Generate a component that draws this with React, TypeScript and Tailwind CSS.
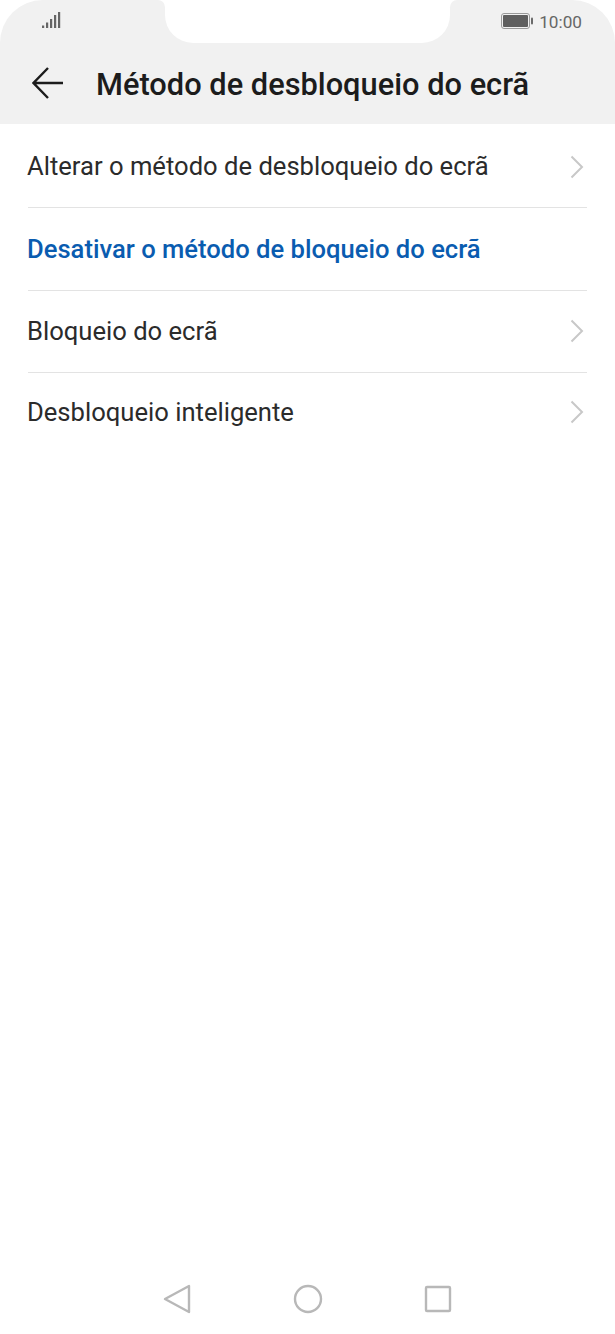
const rows = [
  { label: "Alterar o método de desbloqueio do ecrã", chevron: true },
  { label: "Desativar o método de bloqueio do ecrã", chevron: false },
  { label: "Bloqueio do ecrã", chevron: true },
  { label: "Desbloqueio inteligente", chevron: true },
];

function Signal() {
  return (
    <svg width="20" height="18" viewBox="0 0 20 18" fill="#666666">
      <rect x="1" y="14.5" width="2.2" height="2.5" />
      <rect x="5" y="11.5" width="2.2" height="5.5" />
      <rect x="9" y="8" width="2.2" height="9" />
      <rect x="13" y="4" width="2.2" height="13" />
      <rect x="17" y="1" width="2.2" height="16" />
    </svg>
  );
}

function Battery() {
  return (
    <svg width="33" height="16" viewBox="0 0 33 16">
      <rect x="0.5" y="0.5" width="28" height="15" rx="2.5" fill="none" stroke="#9a9a9a" />
      <rect x="2" y="2" width="25" height="12" rx="1" fill="#5f5f5f" />
      <rect x="30" y="4.5" width="2" height="7" rx="1" fill="#6a6a6a" />
    </svg>
  );
}

function Chevron() {
  return (
    <svg width="14" height="24" viewBox="0 0 14 24" fill="none" stroke="#c8c8c8" strokeWidth="2">
      <path d="M1.5 1.5 L12 12 L1.5 22.5" />
    </svg>
  );
}

export default function App() {
  return (
    <div className="flex h-[1334px] w-[615px] flex-col bg-white font-['Roboto',sans-serif]">
      <div className="flex h-[43px]">
        <div className="flex w-[165px] items-start rounded-tl-[60px] rounded-tr-[10px] bg-[#f1f1f1] pl-[41px] pt-[11px]">
          <Signal />
        </div>
        <div className="flex-1 bg-[#f1f1f1]">
          <div className="h-full rounded-b-[28px] bg-white" />
        </div>
        <div className="flex w-[165px] items-start justify-end gap-[5px] rounded-tl-[10px] rounded-tr-[60px] bg-[#f1f1f1] pr-[33px] pt-[13px]">
          <Battery />
          <span className="text-[17.2px] leading-[18px] text-[#666666]">10:00</span>
        </div>
      </div>
      <header className="flex h-[81px] items-start bg-[#f1f1f1] pl-[32px] pt-[24px]">
        <svg width="32" height="32" viewBox="0 0 32 32" fill="none" stroke="#1c1c1c" strokeWidth="2.4">
          <path d="M31 16 H1.5 M16 1 L1.5 16 L16 31" />
        </svg>
        <h1 className="ml-[32px] text-[30.8px] leading-[36px] font-medium text-[#1c1c1c]">
          Método de desbloqueio do ecrã
        </h1>
      </header>
      <ul className="mt-[2px] flex flex-col pl-[28px] pr-[28px]">
        {rows.map((row) => (
          <li
            key={row.label}
            className="flex h-[82.3px] items-center justify-between border-b border-[#e3e3e3] last:h-[79px] last:border-b-0"
          >
            <span
              className={
                row.chevron
                  ? "-ml-[1px] text-[25.6px] text-[#2b2b2b]"
                  : "-ml-[1px] text-[25.6px] font-medium text-[#0a5cb0]"
              }
            >
              {row.label}
            </span>
            {row.chevron && (
              <span className="pr-[3px]">
                <Chevron />
              </span>
            )}
          </li>
        ))}
      </ul>
      <nav className="mt-auto flex h-[66px] items-start justify-center gap-[100px] pb-[20px] pt-[16px]">
        <svg width="30" height="30" viewBox="0 0 30 30" fill="none" stroke="#b8b8b8" strokeWidth="2.4" strokeLinejoin="round">
          <path d="M2 15 L26 2 V28 Z" />
        </svg>
        <svg width="30" height="30" viewBox="0 0 30 30" fill="none" stroke="#b8b8b8" strokeWidth="2.4">
          <circle cx="15" cy="15" r="13" />
        </svg>
        <svg width="30" height="30" viewBox="0 0 30 30" fill="none" stroke="#b8b8b8" strokeWidth="2.4" strokeLinejoin="round">
          <rect x="3" y="3" width="24" height="24" rx="1" />
        </svg>
      </nav>
    </div>
  );
}
